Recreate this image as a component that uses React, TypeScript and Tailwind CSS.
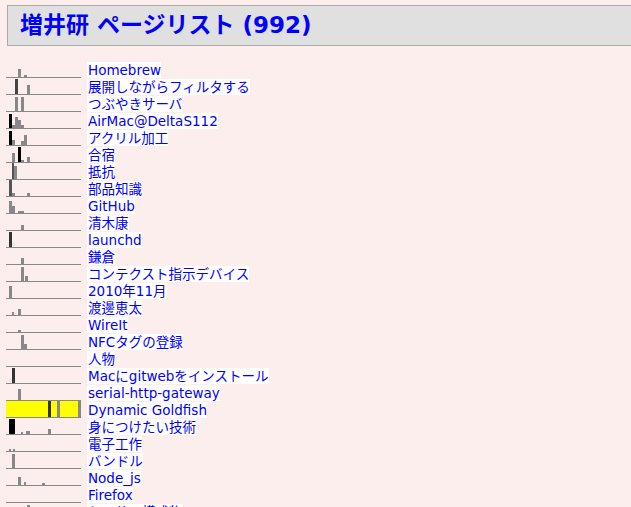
type Bar = [number, number, string, number?];

const G = "#888888";
const D = "#444444";
const K = "#000000";

const PAGES: { title: string; bars: Bar[]; hot?: boolean }[] = [
  { title: "Homebrew", bars: [[12, 8, G], [18, 2, G]] },
  { title: "展開しながらフィルタする", bars: [[9, 15, D], [21, 9, G]] },
  { title: "つぶやきサーバ", bars: [[9, 14, G], [15, 14, G]] },
  { title: "AirMac@DeltaS112", bars: [[3, 14, K], [6, 3, G], [9, 11, G], [12, 8, G], [15, 3, G]] },
  { title: "アクリル加工", bars: [[3, 14, K], [6, 5, G], [15, 4, G], [18, 10, G]] },
  { title: "合宿", bars: [[6, 9, G], [12, 15, K], [15, 2, G], [21, 5, G]] },
  { title: "抵抗", bars: [[6, 16, "#555555", 2], [8, 13, G]] },
  { title: "部品知識", bars: [[3, 16, "#555555"], [6, 3, G], [21, 3, G]] },
  { title: "GitHub", bars: [[3, 12, G], [6, 7, G], [12, 2, G], [15, 2, G]] },
  { title: "清木康", bars: [[15, 5, G]] },
  { title: "launchd", bars: [[3, 15, "#333333"]] },
  { title: "鎌倉", bars: [[15, 6, G]] },
  { title: "コンテクスト指示デバイス", bars: [[15, 14, G], [19, 5, G]] },
  { title: "2010年11月", bars: [[3, 12, G]] },
  { title: "渡邊恵太", bars: [[6, 3, G, 2], [12, 6, G]] },
  { title: "WireIt", bars: [[12, 2, G]] },
  { title: "NFCタグの登録", bars: [[15, 14, G], [18, 5, G]] },
  { title: "人物", bars: [] },
  { title: "Macにgitwebをインストール", bars: [[6, 15, "#333333"]] },
  { title: "serial-http-gateway", bars: [[12, 11, G]] },
  { title: "Dynamic Goldfish", hot: true, bars: [[42, 16, "#333333"], [51, 16, G], [72, 16, G]] },
  { title: "身につけたい技術", bars: [[3, 15, K, 6], [15, 2, G, 2], [20, 3, G, 4], [42, 5, G]] },
  { title: "電子工作", bars: [[3, 2, G, 2], [7, 2, G, 2]] },
  { title: "バンドル", bars: [[6, 14, G]] },
  { title: "Node_js", bars: [[12, 8, G], [18, 3, G, 2], [36, 2, G]] },
  { title: "Firefox", bars: [] },
  { title: "センサー構成物", bars: [[21, 14, G]] },
];

function Spark({ bars, hot }: { bars: Bar[]; hot?: boolean }) {
  return (
    <svg width="75" height="17" viewBox="0 0 75 17" className="block shrink-0">
      {hot ? <rect x="0" y="0" width="75" height="16" fill="#ffff00" /> : null}
      {bars.map(([x, h, c, w], i) => (
        <rect key={i} x={x} y={16 - h} width={w ?? 3} height={h} fill={c} />
      ))}
      <rect x="0" y="16" width="75" height="1" fill="#888888" />
    </svg>
  );
}

export default function App() {
  return (
    <div
      className="min-h-[507px] overflow-hidden bg-[#fdeeee] pt-[5px]"
      style={{ fontFamily: '"DejaVu Sans", "Noto Sans CJK JP", sans-serif' }}
    >
      <header className="ml-[7px] mr-[-20px] flex h-[41px] items-center border border-[#aaaaaa] bg-[#e0e0e0] pl-[12px]">
        <h1 className="text-[23px] font-bold leading-none text-[#0000ff]">増井研 ページリスト (992)</h1>
      </header>

      <ul className="mt-[15px] pl-[6px]">
        {PAGES.map((p, i) => (
          <li key={i} className="flex h-[17px] items-center">
            <Spark bars={p.bars} hot={p.hot} />
            <span className="ml-[6px] whitespace-nowrap bg-white pl-px text-[13.5px] leading-[16px] text-[#0000ff]">
              {p.title}
            </span>
          </li>
        ))}
      </ul>
    </div>
  );
}
